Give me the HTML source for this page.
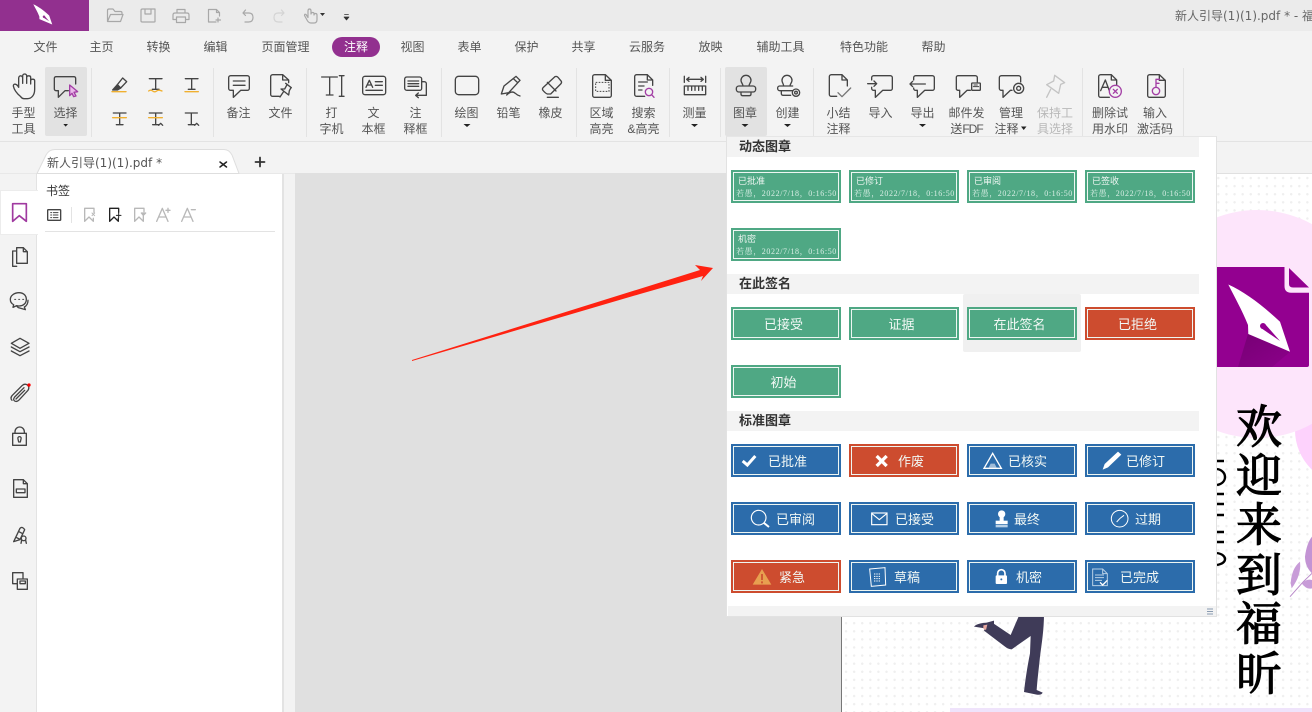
<!DOCTYPE html>
<html lang="zh"><head><meta charset="utf-8"><title>福昕</title>
<style>
*{box-sizing:border-box;margin:0;padding:0}
html,body{width:1312px;height:712px;overflow:hidden;background:#f3f3f3;font-family:"Liberation Sans","Noto Sans CJK SC",sans-serif}
.a{position:absolute}
.l{position:absolute;transform:translateX(-50%);white-space:nowrap;font-size:12px;line-height:16px;color:#555;text-align:center}
.sep{position:absolute;top:68px;width:1px;height:69px;background:#e3e3e3}
.s{position:absolute;width:110px;height:33px;border:2px solid;color:#f2f8f5}
.s:after{content:"";position:absolute;inset:0;border:1px solid #eef6f2}
.g{background:#4fa884;border-color:#4fa884}.r{background:#cd4c2f;border-color:#cd4c2f}.b{background:#2c6cab;border-color:#2c6cab}
.s b{position:absolute;left:5px;top:3px;font:400 9px/13px "Liberation Sans","Noto Sans CJK SC",sans-serif;color:#eef6f2}
.s i{position:absolute;left:3px;top:16px;font:400 8px/11px "Liberation Serif","Noto Serif CJK SC",serif;letter-spacing:.6px;color:#d8eee5;white-space:nowrap}
.s span{position:absolute;left:-5px;right:0;top:6px;text-align:center;font-size:13px;line-height:19px}
.s em{position:absolute;top:6px;font-style:normal;font-size:13px;line-height:19px;white-space:nowrap}
.h{position:absolute;left:727px;width:472px;height:20px;background:#f3f3f3;font-size:13px;font-weight:700;line-height:20px;color:#333;padding-left:12px}
svg{position:absolute;left:0;top:0}
</style></head><body>

<!-- chrome backgrounds -->
<div class="a" style="left:0;top:0;width:1312px;height:31px;background:#ebebeb"></div>
<div class="a" style="left:0;top:0;width:89px;height:31px;background:#92308f"></div>
<div class="a" style="left:0;top:141px;width:1312px;height:1px;background:#e3e3e3"></div>
<div class="a" style="left:45px;top:67px;width:42px;height:69px;background:#e2e2e2;border-radius:2px"></div>
<div class="a" style="left:725px;top:67px;width:42px;height:69px;background:#e2e2e2;border-radius:2px"></div>
<div class="a" style="left:332px;top:37px;width:48px;height:20px;background:#92308f;border-radius:10px"></div>

<!-- document area -->
<div class="a" style="left:295px;top:173px;width:1017px;height:539px;background:#e0e0e0"></div>
<div class="a" style="left:841px;top:174px;width:471px;height:538px;background-color:#fff;background-image:radial-gradient(circle,#efefef 1.1px,transparent 1.3px);background-size:8.1px 8.1px;border-left:1px solid #777"></div>
<div class="a" style="left:950px;top:708px;width:362px;height:4px;background:#efe3fb"></div>
<div class="a" style="left:0;top:173px;width:295px;height:1px;background:#e8e8e8"></div>
<div class="a" style="left:36px;top:174px;width:248px;height:538px;background:#fff;border-left:1px solid #e3e3e3;border-right:2px solid #e3e3e3"></div>
<div class="a" style="left:0;top:190px;width:38px;height:45px;background:#fff;border:1px solid #ececec;border-right:0"></div>
<div class="a" style="left:45px;top:231px;width:230px;height:1px;background:#e3e3e3"></div>
<div class="a" style="left:71px;top:207px;width:1px;height:16px;background:#e3e3e3"></div>

<!-- page art -->
<svg width="1312" height="712" viewBox="0 0 1312 712">
<circle cx="1350" cy="430" r="55" fill="#fdd2fc"/>
<circle cx="1257" cy="324" r="114" fill="#fde5fb"/>
<linearGradient id="sh" x1="0" y1="0" x2="1" y2="1"><stop offset="0" stop-color="#760074"/><stop offset="1" stop-color="#8c008a"/></linearGradient>
<path d="M1217 267H1284.5V286Q1284.5 292.7 1291 292.7H1309V365Q1309 367 1307 367H1217Z" fill="#930090"/>
<path d="M1289 268L1309 287.5H1293Q1289 287.5 1289 284Z" fill="#930090"/>
<path d="M1248 334L1290 352L1272 367H1238Z" fill="url(#sh)"/>
<path d="M1228.3 284.5C1245 292 1262 305 1280 321.7L1290 351.7L1248.3 334L1248 325C1242 310 1235 298 1228.3 284.5Z" fill="#fff"/>
<circle cx="1263" cy="326" r="3" fill="#930090"/><path d="M1261 328L1265 324L1280 341Z" fill="#930090"/>
<g font-family="'Noto Serif CJK SC',serif" font-weight="400" font-size="46" fill="#000" stroke="#000" stroke-width="1.2">
<text x="1236" y="443">欢</text><text x="1236" y="492">迎</text><text x="1236" y="541">来</text><text x="1236" y="591">到</text><text x="1236" y="640">福</text><text x="1236" y="690">昕</text>
</g>
<g stroke="#000" stroke-width="2.4" fill="none">
<path d="M1217 461H1224M1217 469C1223 470 1225 474 1225 477C1225 481 1222 484 1217 485M1217 494H1224M1217 504H1224M1217 515H1224M1217 532H1224M1217 542H1224M1217 553C1223 554 1225 557 1225 559C1225 562 1222 564 1217 565"/>
</g>
<g transform="translate(1200 460) scale(.33333)">
<path d="M270 410L310 365L336 340" stroke="#b98ac9" stroke-width="3" fill="none"/>
<path d="M272 370Q275 325 300 305Q305 345 275 385Z" fill="#c89cd8"/>
<path d="M315 290Q320 250 336 230V340Q315 320 315 290Z" fill="#c394d4"/>
<path d="M305 370Q320 355 336 360V385Q320 390 305 370Z" fill="#c89cd8"/>
</g>
<g transform="translate(840 600) scale(.33333)">
<path d="M540 40L612 40C612 90 605 130 600 170C596 210 592 240 590 270L608 278Q605 286 590 284L552 276C556 240 562 200 570 160L572 108L515 148Q505 148 495 140L432 92L438 78L460 70L512 105Z" fill="#3f3b58"/>
<path d="M402 80Q410 70 440 68L462 62L462 72L435 85Z" fill="#3f3b58"/>
<path d="M430 76L442 74L438 90L430 86Z" fill="#e8a9a0"/>
</g>
<path d="M412 360L700 270L695 265L713 268L701 281L703 276L640 294L412 361Z" fill="#ff2211"/>
</svg>

<!-- tab strip -->
<svg width="300" height="175"><path d="M37 173.500L46 155Q49 149.500 55 149.500H224Q229 149.500 232 155L239 173.500Z" fill="#fff" stroke="#dedede"/></svg>
<div class="a" style="left:47px;top:155px;font-family:'DejaVu Sans','Noto Sans CJK SC',sans-serif;font-size:12px;line-height:16px;color:#555;white-space:nowrap">新人引导(1)(1).pdf *</div>
<div class="a" style="left:1175px;top:8px;width:137px;overflow:hidden;font-family:'DejaVu Sans','Noto Sans CJK SC',sans-serif;font-size:12px;line-height:16px;color:#666;white-space:nowrap">新人引导(1)(1).pdf * - 福昕</div>

<!-- menu -->
<div class="l" style="left:45.500px;top:39px">文件</div>
<div class="l" style="left:101.500px;top:39px">主页</div>
<div class="l" style="left:158.500px;top:39px">转换</div>
<div class="l" style="left:215.500px;top:39px">编辑</div>
<div class="l" style="left:285.500px;top:39px">页面管理</div>
<div class="l" style="left:356px;top:39px;color:#fff">注释</div>
<div class="l" style="left:412.500px;top:39px">视图</div>
<div class="l" style="left:469.500px;top:39px">表单</div>
<div class="l" style="left:526.500px;top:39px">保护</div>
<div class="l" style="left:583.500px;top:39px">共享</div>
<div class="l" style="left:647px;top:39px">云服务</div>
<div class="l" style="left:710.500px;top:39px">放映</div>
<div class="l" style="left:780.500px;top:39px">辅助工具</div>
<div class="l" style="left:864px;top:39px">特色功能</div>
<div class="l" style="left:933.500px;top:39px">帮助</div>

<!-- ribbon labels -->
<div class="l" style="left:23.500px;top:105px">手型<br>工具</div>
<div class="l" style="left:65.500px;top:105px">选择</div>
<div class="l" style="left:238.500px;top:105px">备注</div>
<div class="l" style="left:280.500px;top:105px">文件</div>
<div class="l" style="left:331.500px;top:105px">打<br>字机</div>
<div class="l" style="left:373.500px;top:105px">文<br>本框</div>
<div class="l" style="left:415.500px;top:105px">注<br>释框</div>
<div class="l" style="left:466.500px;top:105px">绘图</div>
<div class="l" style="left:508.500px;top:105px">铅笔</div>
<div class="l" style="left:550.500px;top:105px">橡皮</div>
<div class="l" style="left:601.500px;top:105px">区域<br>高亮</div>
<div class="l" style="left:643.500px;top:105px">搜索<br>&amp;高亮</div>
<div class="l" style="left:694.500px;top:105px">测量</div>
<div class="l" style="left:745px;top:105px">图章</div>
<div class="l" style="left:787.500px;top:105px">创建</div>
<div class="l" style="left:838.500px;top:105px">小结<br>注释</div>
<div class="l" style="left:880.500px;top:105px">导入</div>
<div class="l" style="left:922.500px;top:105px">导出</div>
<div class="l" style="left:966.500px;top:105px">邮件发<br>送<span style="letter-spacing:-1px">FDF</span></div>
<div class="l" style="left:1011px;top:105px">管理<br><span style="margin-right:9px">注释</span></div>
<div class="l" style="left:1055px;top:105px;color:#b8b8b8">保持工<br>具选择</div>
<div class="l" style="left:1110px;top:105px">删除试<br>用水印</div>
<div class="l" style="left:1155px;top:105px">输入<br>激活码</div>
<div class="sep" style="left:91px"></div><div class="sep" style="left:213px"></div><div class="sep" style="left:306px"></div><div class="sep" style="left:441px"></div><div class="sep" style="left:576px"></div><div class="sep" style="left:669px"></div><div class="sep" style="left:720px"></div><div class="sep" style="left:813px"></div><div class="sep" style="left:1082px"></div><div class="sep" style="left:1183px"></div>

<!-- bookmarks -->
<div class="a" style="left:46px;top:183px;font-size:12px;line-height:16px;color:#333">书签</div>

<!-- icons chrome -->
<svg width="1312" height="712" viewBox="0 0 1312 712" fill="none" stroke-linecap="round" stroke-linejoin="round">
<!-- logo -->
<g transform="translate(33.300 4.300) scale(.307 .3) translate(-1228.300 -284.500)">
<path d="M1228.3 284.5C1245 292 1262 305 1280 321.7L1290 351.7L1248.3 334L1248 325C1242 310 1235 298 1228.3 284.5Z" fill="#fff"/>
<circle cx="1263" cy="326" r="4" fill="#92308f"/><path d="M1260 328L1265 323L1280 341Z" fill="#92308f"/>
</g>
<!-- QAT -->
<g stroke="#a8a8a8" stroke-width="1.200">
<path d="M107.500 21.500V10.500Q107.500 9 109 9H113L115 11.500H120.500Q122 11.500 122 13V14.500M107.500 21.500H120.500L123 14.500H110.500L107.500 21.500Z"/>
<path d="M142.500 9H155V21.500Q155 22 154 22H142.500Q141 22 141 21V10.500Q141 9 142.500 9ZM145 9V14H151V9"/>
<path d="M177 13V9.500H185V13M175 13H187Q189 13 189 15V19.500H185.500M176.500 19.500H173V15Q173 13 175 13M176.500 17H185.500V22.500H176.500Z"/>
<path d="M216 22H208.500V9.500H216.500L219.500 12.500V16M216.500 9.500V12.500H219.500M218 18V22M216 20H220.500"/>
<path d="M243 13H249Q253 13 253 17.500Q253 22 248.500 22H245M243 13L245.500 10M243 13L245.500 15.500"/>
<path d="M304.500 15.500L307 20Q308.500 23 311 23H314Q317 23 317 19.500V15Q317 13.500 315.500 13.500T314 15V13.500Q314 12.500 312.500 12.500T311 14V11Q311 9 309.500 9T308 11V17.500L306 14.500Q304.500 13.500 304.500 15.500Z"/>
</g>
<path d="M284 13H278Q274 13 274 17.500Q274 22 278.500 22H282M284 13L281.500 10M284 13L281.500 15.500" stroke="#d4d4d4" stroke-width="1.200"/>
<path d="M320 13H325L322.500 16Z" fill="#333"/>
<path d="M344.500 14.500H348.500M344 17H349L346.500 20Z" stroke="#333" fill="#333" stroke-width=".7"/>

<!-- tab -->
<path d="M220 162L226.500 167M226.500 162L220 167" stroke="#222" stroke-width="1.500"/>
<path d="M260 157.500V166.500M255.500 162H264.500" stroke="#333" stroke-width="1.800"/>

<!-- zoom-1 ribbon -->
<g transform="scale(.33333)" stroke="#444" stroke-width="4">
<path d="M62 290C50 280 42 268 40 258C40 250 50 250 56 262V235C56 225 68 225 68 235V250V228C68 220 80 220 80 228V250V232C80 226 92 226 92 232V252V242C92 236 104 236 104 242V268C104 285 95 296 82 296H72C68 296 65 294 62 290Z"/>
<path d="M205 272H195L175 292V272H168A5 5 0 0 1 163 267V235A5 5 0 0 1 168 230H222A5 5 0 0 1 227 235V252"/>
<path d="M209 255L233 275L222 277L228 288L221 290L216 280L209 287Z" fill="#eab9ea" stroke="#a33fa5"/>
<path d="M190 372H204L197 380Z" fill="#222" stroke="none"/>
<path d="M352 254L368 234L380 245L362 264Z"/><path d="M338 270L352 254L362 264L352 270Z" fill="#444"/>
<path d="M336 275H378" stroke="#f0b030"/>
<path d="M448 236H486M467 236V268M457 268H477"/><path d="M446 273Q452 268 458 273T470 273T486 273" stroke="#f0b030"/>
<path d="M556 236H594M575 236V268M565 268H585"/><path d="M555 275H595" stroke="#f0b030"/>
<path d="M340 339H378M359 339V374M349 374H369"/><path d="M338 353H379" stroke="#f0b030"/>
<path d="M448 339H486M467 339V374M458 374H476"/><path d="M446 353H487" stroke="#f0b030"/><path d="M476 376L482 370L488 376"/>
<path d="M556 339H592M574 339V374M565 374H583M584 376L590 370L596 376"/>
<path d="M692 227H742A6 6 0 0 1 748 233V265A6 6 0 0 1 742 271H722L700 292V271H692A6 6 0 0 1 686 265V233A6 6 0 0 1 692 227ZM700 243H735M700 256H735"/>
<path d="M838 289H818A6 6 0 0 1 812 283V230A6 6 0 0 1 818 224H848L866 240V248M848 224V240H866"/>
<path d="M857 250L874 263M861 254L854 267L843 267L866 285L868 272L873 263M850 276L840 291"/>
<path d="M965 231H1012M989 231V285M979 285H999M1018 227H1032M1025 227V289M1018 289H1032"/>
<rect x="1088" y="229" width="69" height="55" rx="7"/>
<path d="M1098 262L1108 241L1118 262M1102 255H1114M1126 245H1147M1126 256H1147M1098 271H1147"/>
<path d="M1221 231H1259A6 6 0 0 1 1265 237V265A6 6 0 0 1 1259 271H1221A7 7 0 0 1 1214 265V237A7 7 0 0 1 1221 231ZM1224 243H1256M1224 251H1256M1224 259H1256"/>
<path d="M1265 245H1273A6 6 0 0 1 1279 251V286H1248M1255 279L1247 286L1255 293"/>
</g>

<!-- zoom-2 ribbon -->
<g transform="translate(440 0) scale(.33333)" stroke="#444" stroke-width="4">
<rect x="46" y="229" width="70" height="55" rx="10"/>
<path d="M184 282L192 258L228 229L240 241L206 278Z M184 282L206 278M220 236L233 248M200 285Q215 270 226 280Q232 286 240 288"/>
<path d="M310 262L345 230Q350 228 354 232L364 244Q366 248 362 252L332 282H322Q316 280 308 270Q306 266 310 262ZM322 247L348 273M322 292H355"/>
<path d="M464 292A6 6 0 0 1 458 286V230A6 6 0 0 1 464 224H496L514 241V286A6 6 0 0 1 508 292ZM496 224V241H514"/>
<rect x="467" y="247" width="40" height="27" stroke-dasharray="5 4" stroke-width="3" stroke-linecap="butt"/>
<path d="M614 289H590A6 6 0 0 1 584 283V230A6 6 0 0 1 590 224H622L638 240V256M622 224V240H638M596 246H622M596 258H612M596 270H606"/>
<circle cx="627" cy="276" r="11" stroke="#a33fa5"/><path d="M635 284L642 292" stroke="#a33fa5"/>
<path d="M733 229V247M797 229V247M740 238H790M747 232L740 238L747 244M783 232L790 238L783 244"/>
<path d="M733 258H797V284H733ZM744 258V271M755 258V271M765 258V271M776 258V271M787 258V271"/>
<path d="M909 258C909 252 903 248 903 241A15 15 0 0 1 933 241C933 248 927 252 927 258M897 258H939A8 8 0 0 1 947 266V268A8 8 0 0 1 939 276H897A8 8 0 0 1 889 268V266A8 8 0 0 1 897 258ZM903 276V282Q903 287 908 287H928Q933 287 933 282V276"/>
<path d="M1031 258C1031 252 1026 248 1026 241A15 15 0 0 1 1056 241C1056 248 1050 252 1050 258M1019 258H1058M1058 272H1019A6 6 0 0 1 1013 266V264A6 6 0 0 1 1019 258M1024 272V280Q1024 286 1030 286H1052"/>
<circle cx="1068" cy="278" r="11"/><circle cx="1068" cy="278" r="4"/>
<path d="M1190 289H1174A6 6 0 0 1 1168 283V230A6 6 0 0 1 1174 224H1206L1222 240V258M1206 224V240H1222"/>
<path d="M1194 278L1206 290L1232 264" stroke="#777"/>
</g>

<!-- zoom-3 ribbon -->
<g transform="translate(872 0) scale(.33333)" stroke="#444" stroke-width="4">
<path d="M-1 240V233A6 6 0 0 1 5 227H55A6 6 0 0 1 61 233V265A6 6 0 0 1 55 271H32L10 292V271H5A6 6 0 0 1 -1 265V262M-13 251H14M6 243L14 251L6 259"/>
<path d="M125 240V233A6 6 0 0 1 131 227H181A6 6 0 0 1 187 233V265A6 6 0 0 1 181 271H158L136 292V271H131A6 6 0 0 1 125 265V264M114 252H160M122 244L114 252L122 260"/>
<path d="M295 271H285L263 292V271H258A5 5 0 0 1 253 265V233A5 5 0 0 1 258 227H310A6 6 0 0 1 316 233V246"/>
<rect x="299" y="249" width="26" height="22" rx="2"/><path d="M304 260H320M306 255H316" stroke-width="3"/>
<path d="M420 271H415L393 292V271H388A6 6 0 0 1 382 265V233A6 6 0 0 1 388 227H440A6 6 0 0 1 446 233V246"/>
<circle cx="440" cy="265" r="15"/><circle cx="440" cy="265" r="6"/>
<path d="M548 226L578 248L566 253L560 280L524 254L545 243ZM536 268L524 292" stroke="#c4c4c4"/>
<path d="M712 292H686A6 6 0 0 1 680 286V230A6 6 0 0 1 686 224H718L734 240V256M718 224V240H734M686 272L700 240L712 272M692 262H708"/>
<circle cx="730" cy="274" r="18" stroke="#a33fa5"/><path d="M724 268L736 280M736 268L724 280" stroke="#a33fa5"/>
<path d="M833 292A6 6 0 0 1 827 286V230A6 6 0 0 1 833 224H862L880 241V286A6 6 0 0 1 874 292ZM862 224V241H880"/>
<circle cx="852" cy="273" r="11" stroke="#a33fa5"/><path d="M852 262V238H863M852 250H861" stroke="#a33fa5"/>
</g>

<!-- drop arrows -->
<g fill="#222">
<path d="M463.500 124H470.500L467 127Z"/><path d="M691 124H698L694.500 127Z"/><path d="M741.500 124H748.500L745 127Z"/><path d="M784 124H791L787.500 127Z"/><path d="M919 124H926L922.500 127Z"/><path d="M1021 126.500H1026.500L1023.700 130Z"/>
</g>

<!-- sidebar -->
<g transform="translate(0 175) scale(.33333)" stroke="#444" stroke-width="4">
<path d="M38 86H79V139L58 122L38 139Z" stroke="#a03aa0" stroke-width="5"/>
<path d="M50 274H38V228H50M50 218H70L82 230V265H50ZM70 218V230H82"/>
<path d="M57 353C43 353 31 362 31 373C31 380 35 386 41 389L39 397L50 392Q54 393 57 393C71 393 79 384 79 373C79 362 71 353 57 353ZM50 393L55 398L76 404L73 396Q84 390 84 376"/>
<path d="M44 373H47M56 373H59M68 373H71" stroke-width="3"/>
<path d="M60 490L87 505L60 520L34 505ZM34 516L60 530L87 516M34 528L60 542L87 528"/>
<path d="M72 638L44 666Q38 674 44 678T58 674L84 646Q90 636 82 630T66 632L36 662Q30 670 36 676M74 646L48 672"/>
<circle cx="87" cy="630" r="5" fill="#f00" stroke="none"/>
<path d="M38 775H79V811H38ZM45 775V770A14 14 0 0 1 73 770V775M54 792A5 5 0 1 1 63 792L61 801H56Z"/>
<path d="M41 914H70L82 926V967H41ZM70 914V926H82M49 942H75V953H49Z"/>
<path d="M41 1100L60 1060Q64 1056 68 1058T74 1064L60 1094ZM48 1087L58 1092M57 1070L66 1075"/>
<circle cx="71" cy="1090" r="7"/><path d="M65 1096L63 1105M77 1096L79 1105"/>
<path d="M38 1226V1193H69V1212M50 1226H38M52 1212H82V1243H52ZM60 1218H76V1226H60Z"/>
<!-- panel tools -->
<rect x="143" y="104" width="39" height="32" rx="2"/>
<path d="M152 113H155M152 120H155M152 128H155M160 113H174M160 120H174M160 128H174" stroke-width="3"/>
<g stroke="#b8b8b8">
<path d="M254 100H282V112M254 100V139L267 126L280 139V130"/><path d="M276 114L284 122M284 114L276 122" stroke-width="3"/>
<path d="M404 100H432V110M404 100V139L417 126L430 139V122"/><path d="M424 114H437L430 121Z" fill="#b8b8b8"/>
<path d="M470 139L487 100L504 139M476 126H498M498 106H510M504 100V112"/>
<path d="M545 139L562 100L579 139M551 126H573M574 104H586"/>
</g>
<path d="M329 100H356V112M329 100V139L342 126L355 139V130" stroke="#222"/><path d="M356 114V128M349 121H363" stroke="#222" stroke-width="3"/>
</g>
</svg>

<!-- popup -->
<div class="a" style="left:726px;top:136px;width:491px;height:481px;background:#fff;border:1px solid #e2e2e2;border-top:1px solid #e6e6e6"></div>
<div class="a" style="left:963px;top:294px;width:118px;height:58px;background:#f0f0f0;border-radius:2px"></div>
<div class="h" style="top:137px">动态图章</div>
<div class="h" style="top:274px">在此签名</div>
<div class="h" style="top:411px">标准图章</div>
<div class="a" style="left:728px;top:606px;width:488px;height:10px;background:#f3f3f3"></div>

<div class="s g" style="left:731px;top:170px"><b>已批准</b><i>若愚，2022/7/18，0:16:50</i></div>
<div class="s g" style="left:849px;top:170px"><b>已修订</b><i>若愚，2022/7/18，0:16:50</i></div>
<div class="s g" style="left:967px;top:170px"><b>已审阅</b><i>若愚，2022/7/18，0:16:50</i></div>
<div class="s g" style="left:1085px;top:170px"><b>已签收</b><i>若愚，2022/7/18，0:16:50</i></div>
<div class="s g" style="left:731px;top:228px"><b>机密</b><i>若愚，2022/7/18，0:16:50</i></div>

<div class="s g" style="left:731px;top:307px"><span>已接受</span></div>
<div class="s g" style="left:849px;top:307px"><span>证据</span></div>
<div class="s g" style="left:967px;top:307px"><span>在此签名</span></div>
<div class="s r" style="left:1085px;top:307px"><span>已拒绝</span></div>
<div class="s g" style="left:731px;top:365px"><span>初始</span></div>

<div class="s b" style="left:731px;top:444px"><em style="left:35px">已批准</em></div>
<div class="s r" style="left:849px;top:444px"><em style="left:47px">作废</em></div>
<div class="s b" style="left:967px;top:444px"><em style="left:39px">已核实</em></div>
<div class="s b" style="left:1085px;top:444px"><em style="left:39px">已修订</em></div>
<div class="s b" style="left:731px;top:502px"><em style="left:43px">已审阅</em></div>
<div class="s b" style="left:849px;top:502px"><em style="left:44px">已接受</em></div>
<div class="s b" style="left:967px;top:502px"><em style="left:45px">最终</em></div>
<div class="s b" style="left:1085px;top:502px"><em style="left:48px">过期</em></div>
<div class="s r" style="left:731px;top:560px"><em style="left:46px">紧急</em></div>
<div class="s b" style="left:849px;top:560px"><em style="left:43px">草稿</em></div>
<div class="s b" style="left:967px;top:560px"><em style="left:47px">机密</em></div>
<div class="s b" style="left:1085px;top:560px"><em style="left:33px">已完成</em></div>

<!-- stamp icons -->
<svg width="1312" height="712" viewBox="0 0 1312 712" fill="none">
<g transform="translate(720 375) scale(.33333)" stroke="#fff" stroke-width="4">
<path d="M68 258L82 270L106 243" stroke-width="9"/>
<path d="M470 243L500 273M500 243L470 273" stroke-width="10"/>
<path d="M818 235L844 280H792Z"/><path d="M806 278L812 266H824L830 278Z" fill="#fff" opacity=".55" stroke="none"/>
<path d="M1148 284L1154 267L1194 230L1204 239L1164 277Z" fill="#fff" stroke="none"/>
<circle cx="116" cy="428" r="22" stroke-width="3.500"/><path d="M132 444L147 456" stroke-width="6"/>
<rect x="455" y="414" width="46" height="35" stroke-width="3.500"/><path d="M456 416L478 434L500 416" stroke-width="3.500"/>
<circle cx="845" cy="417" r="11" fill="#fff" stroke="none"/><rect x="839" y="425" width="12" height="14" fill="#fff" stroke="none"/><rect x="827" y="437" width="36" height="10" fill="#fff" stroke="none"/><rect x="827" y="449" width="36" height="8" fill="#b8d0e6" stroke="none"/>
<circle cx="1199" cy="431" r="25" stroke-width="3"/><path d="M1199 431L1212 421M1199 431L1190 441" stroke-width="3"/>
<path d="M126 582L154 629H98Z" fill="#e8a050" stroke="none"/><path d="M126 597V615M126 619V625" stroke="#cd4c2f" stroke-width="5"/>
<path d="M449 582L495 578L497 630L454 634Z" stroke-width="3"/><path d="M462 597H482M462 604H482M462 611H482M462 618H482" stroke-width="3" stroke-dasharray="3 2"/>
<path d="M833 602V595A11 11 0 0 1 855 595V602" stroke-width="5"/><rect x="827" y="601" width="34" height="26" rx="3" fill="#fff" stroke="none"/><circle cx="844" cy="613" r="3" fill="#2c6cab" stroke="none"/>
<path d="M1118 632V582H1148L1162 596V632ZM1148 582V596H1162M1125 600H1152M1125 608H1152M1125 616H1146" stroke="#b8d0e6" stroke-width="3"/>
<path d="M1140 622L1148 630L1162 616" stroke-width="4"/>
</g>
<path d="M1207 609H1213M1207 611.500H1213M1207 614H1213" stroke="#8a9bb0"/>
</svg>
</body></html>
